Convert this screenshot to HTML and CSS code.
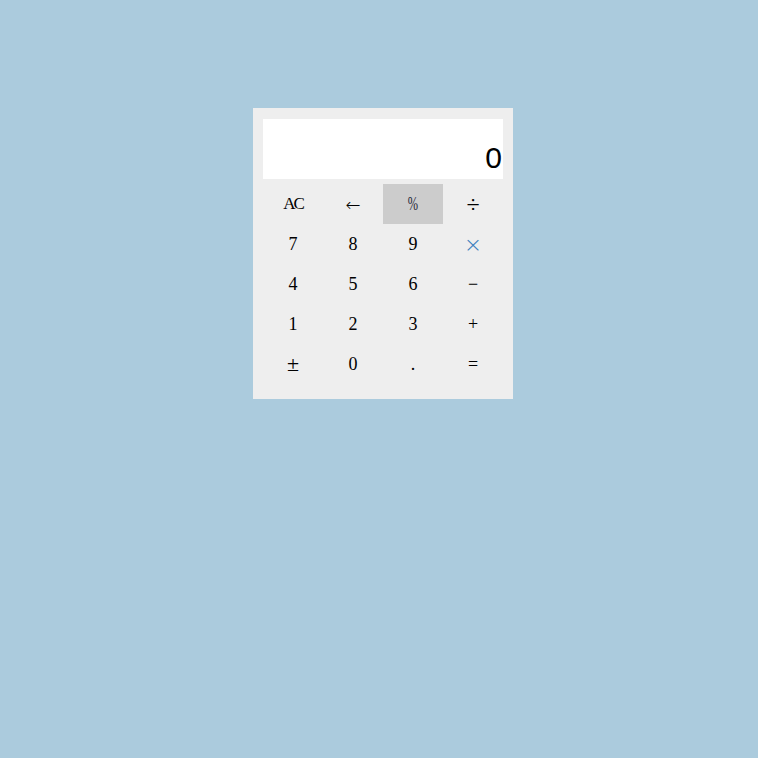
FILE: index.html
```html
<!DOCTYPE html>
<html>
<head>
<meta charset="utf-8">
<link rel="stylesheet" href="styles.css">
</head>
<body>
<div class="calc">
  <div class="display">0</div>
  <div class="keys">
    <div class="key ac">AC</div>
    <div class="key arrow">←</div>
    <div class="key active"><span class="pct">%</span></div>
    <div class="key div">÷</div>
    <div class="key">7</div>
    <div class="key">8</div>
    <div class="key">9</div>
    <div class="key times">×</div>
    <div class="key">4</div>
    <div class="key">5</div>
    <div class="key">6</div>
    <div class="key">−</div>
    <div class="key">1</div>
    <div class="key">2</div>
    <div class="key">3</div>
    <div class="key">+</div>
    <div class="key pm">±</div>
    <div class="key">0</div>
    <div class="key">.</div>
    <div class="key">=</div>
  </div>
</div>
</body>
</html>
```
FILE: styles.css
```css
html, body {
  margin: 0;
  padding: 0;
  background: #abcbdd;
  height: 100%;
}
.calc {
  box-sizing: border-box;
  width: 260px;
  margin: 108px 0 0 253px;
  padding: 11px 10px 15px 10px;
  background: #eeeeee;
}
.display {
  box-sizing: border-box;
  height: 60px;
  background: #ffffff;
  font-family: "Liberation Sans", Arial, sans-serif;
  font-size: 30px;
  line-height: 42px;
  padding: 18px 1px 0 0;
  text-align: right;
  color: #000;
  margin-bottom: 5px;
}
.keys {
  display: grid;
  grid-template-columns: repeat(4, 60px);
  grid-auto-rows: 40px;
}
.key {
  display: flex;
  align-items: center;
  justify-content: center;
  font-family: "Liberation Serif", "Times New Roman", serif;
  font-size: 18px;
  color: #000;
}
.ac {
  letter-spacing: -2px;
  font-size: 17px;
}
.active {
  background: #cccccc;
}
.pct {
  display: inline-block;
  font-size: 19px;
  color: #2a2a3a;
  transform: scaleX(0.65);
}
.div {
  font-size: 24px;
}
.pm {
  font-size: 22px;
}
.arrow {
  font-family: "DejaVu Sans", sans-serif;
  font-size: 18px;
  font-weight: 200;
}
.times {
  font-family: "DejaVu Sans", sans-serif;
  font-size: 22px;
  color: #3a7fbd;
  font-weight: 200;
}
```
